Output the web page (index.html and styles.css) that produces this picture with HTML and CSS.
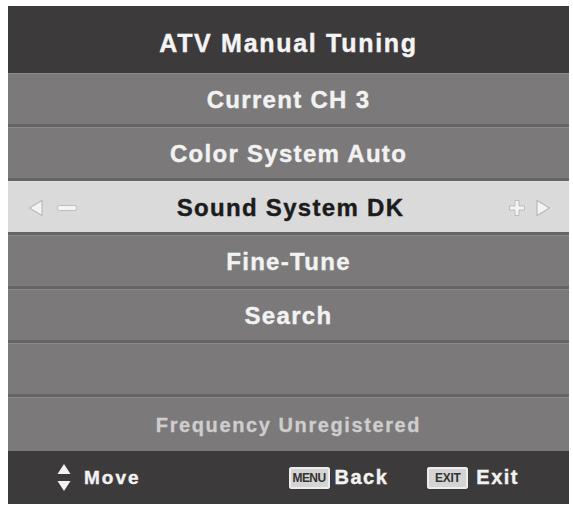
FILE: index.html
```html
<!DOCTYPE html>
<html>
<head>
<meta charset="utf-8">
<link rel="stylesheet" href="styles.css">
</head>
<body>
<div class="panel">
  <div class="title">ATV Manual Tuning</div>
  <div class="row">Current CH 3</div>
  <div class="row">Color System Auto</div>
  <div class="row selected">
    <span class="adj left">
      <svg width="16" height="18" viewBox="0 0 16 18"><polygon points="14,1.5 14,16.5 1.5,9" fill="#f4f4f4" stroke="#b9b9b9" stroke-width="1.2" stroke-linejoin="round"/></svg>
      <svg width="22" height="8" viewBox="0 0 22 8"><rect x="1" y="1.5" width="20" height="5" rx="2.5" fill="#f4f4f4" stroke="#bdbdbd" stroke-width="1"/></svg>
    </span>
    <span class="label">Sound System DK</span>
    <span class="adj right">
      <svg width="18" height="18" viewBox="0 0 18 18"><path d="M7 1.5 H11 V7 H16.5 V11 H11 V16.5 H7 V11 H1.5 V7 H7 Z" fill="#f4f4f4" stroke="#bdbdbd" stroke-width="1" stroke-linejoin="round"/></svg>
      <svg width="16" height="18" viewBox="0 0 16 18"><polygon points="2,1.5 2,16.5 14.5,9" fill="#f4f4f4" stroke="#b9b9b9" stroke-width="1.2" stroke-linejoin="round"/></svg>
    </span>
  </div>
  <div class="row">Fine-Tune</div>
  <div class="row">Search</div>
  <div class="row"></div>
  <div class="row info">Frequency Unregistered</div>
  <div class="footer">
    <div class="hint">
      <svg class="updown" width="14" height="29" viewBox="0 0 14 29"><polygon points="7,1 13.5,11 0.5,11" fill="#f2f2f2"/><polygon points="0.5,18 13.5,18 7,28" fill="#f2f2f2"/></svg>
      <span class="hint-text move">Move</span>
    </div>
    <div class="hint-group">
      <div class="hint">
        <span class="key">MENU</span>
        <span class="hint-text">Back</span>
      </div>
      <div class="hint">
        <span class="key exit">EXIT</span>
        <span class="hint-text">Exit</span>
      </div>
    </div>
  </div>
</div>
</body>
</html>
```

FILE: styles.css
```css
html, body {
  margin: 0;
  padding: 0;
  background: #ffffff;
}

body {
  padding: 6px 4px 0 8px;
  font-family: "Liberation Sans", Arial, sans-serif;
  font-weight: bold;
}

.panel {
  width: 561px;
  display: flex;
  flex-direction: column;
  background: #7a7879;
}

.title {
  height: 67px;
  background: #3d3a3b;
  color: #f4f4f4;
  font-size: 25px;
  letter-spacing: 1.7px;
  -webkit-text-stroke: 0.4px #f4f4f4;
  display: flex;
  align-items: center;
  justify-content: center;
  box-sizing: border-box;
  padding-top: 8px;
}

.row {
  height: 54px;
  box-sizing: border-box;
  border-top: 1px solid #8b898a;
  border-bottom: 3px solid #666465;
  background: #7b797a;
  color: #f2f2f2;
  font-size: 24px;
  letter-spacing: 1.3px;
  -webkit-text-stroke: 0.4px #f2f2f2;
  display: flex;
  align-items: center;
  justify-content: center;
  padding-top: 1px;
}

.row.selected {
  background: #dadada;
  border-top: 1px solid #e2e2e2;
  color: #1c1c1c;
  -webkit-text-stroke: 0.4px #1c1c1c;
  justify-content: space-between;
  padding: 1px 18px 0 20px;
}

.row.selected .label {
  flex: 1;
  text-align: center;
  padding-left: 2px;
}

.adj {
  display: flex;
  align-items: center;
  gap: 12px;
  width: 70px;
}

.adj.right {
  justify-content: flex-end;
  gap: 9px;
}

.row.info {
  color: #cfcdce;
  -webkit-text-stroke: 0.3px #cfcdce;
  font-size: 20px;
  letter-spacing: 1.6px;
  border-bottom: none;
}

.footer {
  height: 53px;
  background: #3d3a3b;
  display: flex;
  align-items: center;
  padding: 0 50px 0 49px;
  color: #f2f2f2;
}

.hint-group {
  margin-left: auto;
  display: flex;
  gap: 39px;
}

.hint {
  display: flex;
  align-items: center;
}

.updown {
  margin-right: 13px;
}

.hint-text {
  font-size: 20px;
  letter-spacing: 1.5px;
  -webkit-text-stroke: 0.4px #f2f2f2;
}

.hint-text.move {
  font-size: 19px;
  letter-spacing: 2px;
}

.key {
  width: 41px;
  height: 22px;
  background: #d4d4d4;
  border-radius: 3px;
  color: #333333;
  font-size: 12px;
  letter-spacing: -0.6px;
  display: flex;
  align-items: center;
  justify-content: center;
  margin-right: 5px;
  box-shadow: inset 0 0 0 2px #ececec;
}

.key.exit {
  margin-right: 8px;
  letter-spacing: -0.2px;
}
```
